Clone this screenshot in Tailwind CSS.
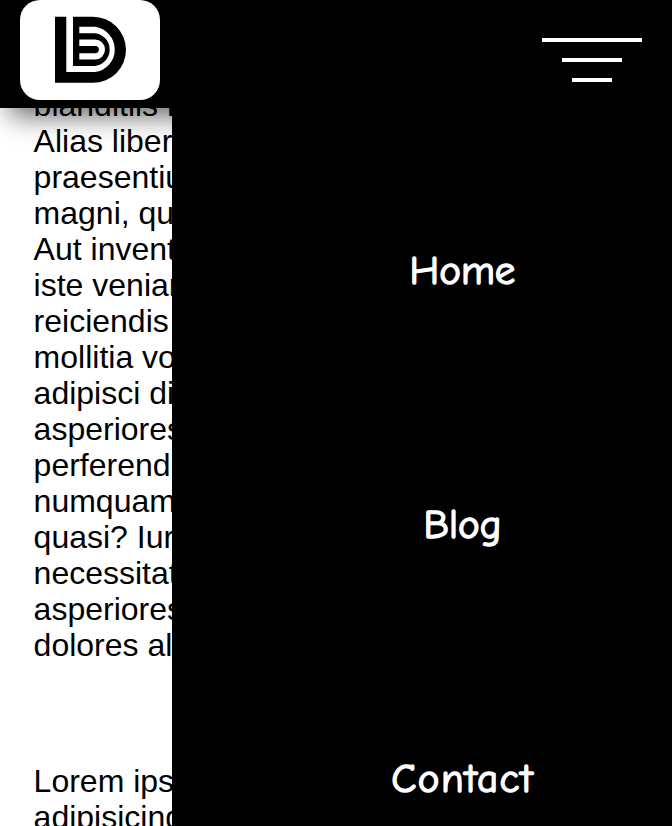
<!DOCTYPE html>
<html lang="en">
<head>
<meta charset="UTF-8">
<meta name="viewport" content="width=device-width, initial-scale=1">
<title>Home</title>
<script src="https://cdn.jsdelivr.net/npm/@tailwindcss/browser@4"></script>
</head>
<body class="relative h-[826px] overflow-hidden bg-white text-black font-['Liberation_Sans',Arial,sans-serif]">
  <header class="relative z-10 flex h-[108px] items-start justify-between bg-black pl-5 pr-[30px] shadow-[10px_8px_25px_rgba(0,0,0,0.6)]">
    <a href="#" class="flex h-[100px] w-[140px] items-center justify-center rounded-[20px] bg-white" aria-label="Logo">
      <svg class="h-[100px] w-[140px]" viewBox="20 0 140 100" fill="none">
        <path fill="#000" fill-rule="evenodd" d="M55 16.8H66.3V72H95A22.8 22.8 0 0 0 95 26.8H79.3V33.2H95A16.5 16.5 0 0 1 95 66H73V16.8H93A33 33 0 0 1 93 82.8H55ZM79.3 39.6V46H95.3A3.6 3.6 0 0 1 95.3 53.2H79.3V59.6H95A10 10 0 0 0 95 39.6Z"/>
      </svg>
    </a>
    <button class="mt-[38px] flex w-[100px] flex-col items-center gap-4" aria-label="Menu">
      <span class="h-1 w-[100px] bg-white"></span>
      <span class="h-1 w-[60px] bg-white"></span>
      <span class="h-1 w-10 bg-white"></span>
    </button>
  </header>
  <main class="-mt-[21px] flex flex-col gap-[100px] whitespace-nowrap pl-[33.6px] text-[32px] leading-[36px]">
    <p>blanditiis nemo<br>Alias libero<br>praesentium<br>magni, quos<br>Aut inventore<br>iste veniam<br>reiciendis<br>mollitia voluptas<br>adipisci dicta<br>asperiores<br>perferendis<br>numquam<br>quasi? Iure<br>necessitatibus<br>asperiores<br>dolores alias</p>
    <p>Lorem ipsum<br>adipisicing</p>
  </main>
  <nav class="absolute top-0 right-0 z-20 h-[826px] w-[500px] overflow-hidden bg-black pt-[144px] pl-[81px] [clip-path:inset(108px_0_0_0)]">
    <ul class="text-center text-[41px] leading-[254px] font-medium text-white font-['Comic_Sans_MS','Comic_Neue',Lato,cursive] [-webkit-text-stroke:1.5px_white]">
      <li class="h-[254px]"><a href="#">Home</a></li>
      <li class="h-[254px]"><a href="#">Blog</a></li>
      <li class="h-[254px] tracking-[1.4px]"><a href="#">Contact</a></li>
    </ul>
  </nav>
</body>
</html>
